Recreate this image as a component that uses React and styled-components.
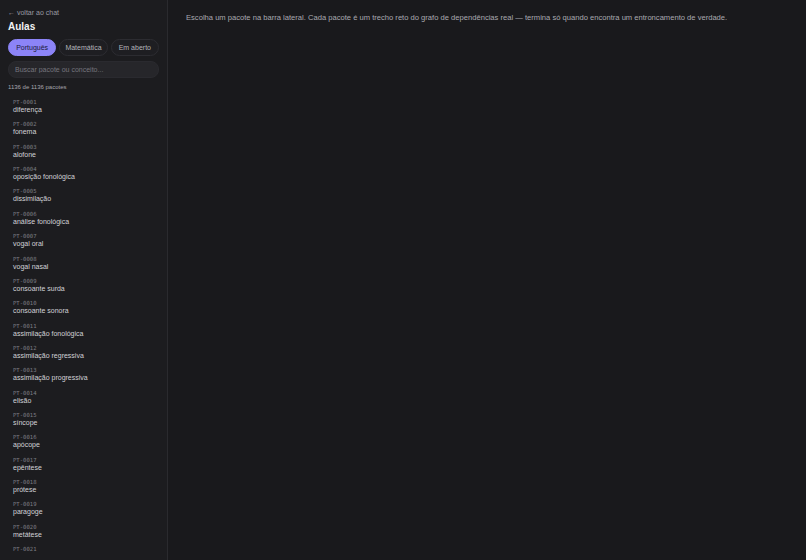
import React from 'react';
import styled, { createGlobalStyle } from 'styled-components';

const packages = [
  'diferença',
  'fonema',
  'alofone',
  'oposição fonológica',
  'dissimilação',
  'análise fonológica',
  'vogal oral',
  'vogal nasal',
  'consoante surda',
  'consoante sonora',
  'assimilação fonológica',
  'assimilação regressiva',
  'assimilação progressiva',
  'elisão',
  'síncope',
  'apócope',
  'epêntese',
  'prótese',
  'paragoge',
  'metátese',
  'haplologia',
];

function App() {
  return (
    <>
      <GlobalStyle />
      <Layout>
        <Sidebar>
          <BackLink href="#">← voltar ao chat</BackLink>
          <Title>Aulas</Title>
          <Tabs>
            <Pill active>Português</Pill>
            <Pill>Matemática</Pill>
            <Pill>Em aberto</Pill>
          </Tabs>
          <Search placeholder="Buscar pacote ou conceito..." />
          <Count>1136 de 1136 pacotes</Count>
          <List>
            {packages.map((name, i) => (
              <Item key={name}>
                <Code>PT-{String(i + 1).padStart(4, '0')}</Code>
                <Name>{name}</Name>
              </Item>
            ))}
          </List>
        </Sidebar>
        <Main>
          <Hint>
            Escolha um pacote na barra lateral. Cada pacote é um trecho reto do
            grafo de dependências real — termina só quando encontra um
            entroncamento de verdade.
          </Hint>
        </Main>
      </Layout>
    </>
  );
}

export default App;

const GlobalStyle = createGlobalStyle`
  html, body {
    margin: 0;
    height: 100%;
    background: #19191c;
    font-family: "Liberation Sans", Arial, sans-serif;
  }
  #root {
    height: 100%;
  }
`;

const Layout = styled.div`
  display: flex;
  height: 100vh;
  overflow: hidden;
`;

const Sidebar = styled.aside`
  width: 151px;
  flex-shrink: 0;
  padding: 8px 8px 7px;
  background: #1c1c1f;
  border-right: 1px solid #2a2a2e;
  display: flex;
  flex-direction: column;
  overflow: hidden;
`;

const BackLink = styled.a`
  font-size: 7px;
  color: #9a9aa2;
  text-decoration: none;
  line-height: 9px;
`;

const Title = styled.h1`
  margin: 4px 0 0;
  font-size: 10px;
  font-weight: 700;
  color: #f2f2f4;
  line-height: 12px;
`;

const Tabs = styled.div`
  display: flex;
  gap: 3px;
  margin-top: 6px;
`;

const Pill = styled.button`
  flex: 1;
  height: 17px;
  padding: 0;
  border-radius: 9px;
  border: 1px solid ${(p) => (p.active ? '#8c84f7' : '#2c2c31')};
  background: ${(p) => (p.active ? '#8c84f7' : '#1e1e22')};
  color: ${(p) => (p.active ? '#1d1b3a' : '#b4b4bb')};
  font-family: inherit;
  font-size: 7px;
  cursor: pointer;
`;

const Search = styled.input`
  margin-top: 5px;
  height: 17px;
  box-sizing: border-box;
  padding: 0 6px;
  border: 1px solid #2a2a2f;
  border-radius: 8px;
  background: #26262a;
  color: #ddd;
  font-family: inherit;
  font-size: 7px;
  outline: none;
  &::placeholder {
    color: #75757d;
  }
`;

const Count = styled.div`
  margin-top: 5px;
  font-size: 6px;
  color: #a6a6ad;
  line-height: 8px;
`;

const List = styled.ul`
  list-style: none;
  margin: 5px 0 0;
  padding: 0;
  flex: 1;
  overflow: hidden;
`;

const Item = styled.li`
  box-sizing: border-box;
  height: 22.37px;
  padding: 3px 5px 0;
  display: flex;
  flex-direction: column;
`;

const Code = styled.span`
  font-family: "DejaVu Sans Mono", "Liberation Mono", monospace;
  font-size: 5.6px;
  color: #7c7c84;
  line-height: 7px;
`;

const Name = styled.span`
  font-size: 7px;
  color: #d2d2d7;
  line-height: 8px;
`;

const Main = styled.main`
  flex: 1;
  padding: 13px 18px;
`;

const Hint = styled.p`
  margin: 0;
  font-size: 7.6px;
  line-height: 10px;
  color: #a9a9b0;
`;
